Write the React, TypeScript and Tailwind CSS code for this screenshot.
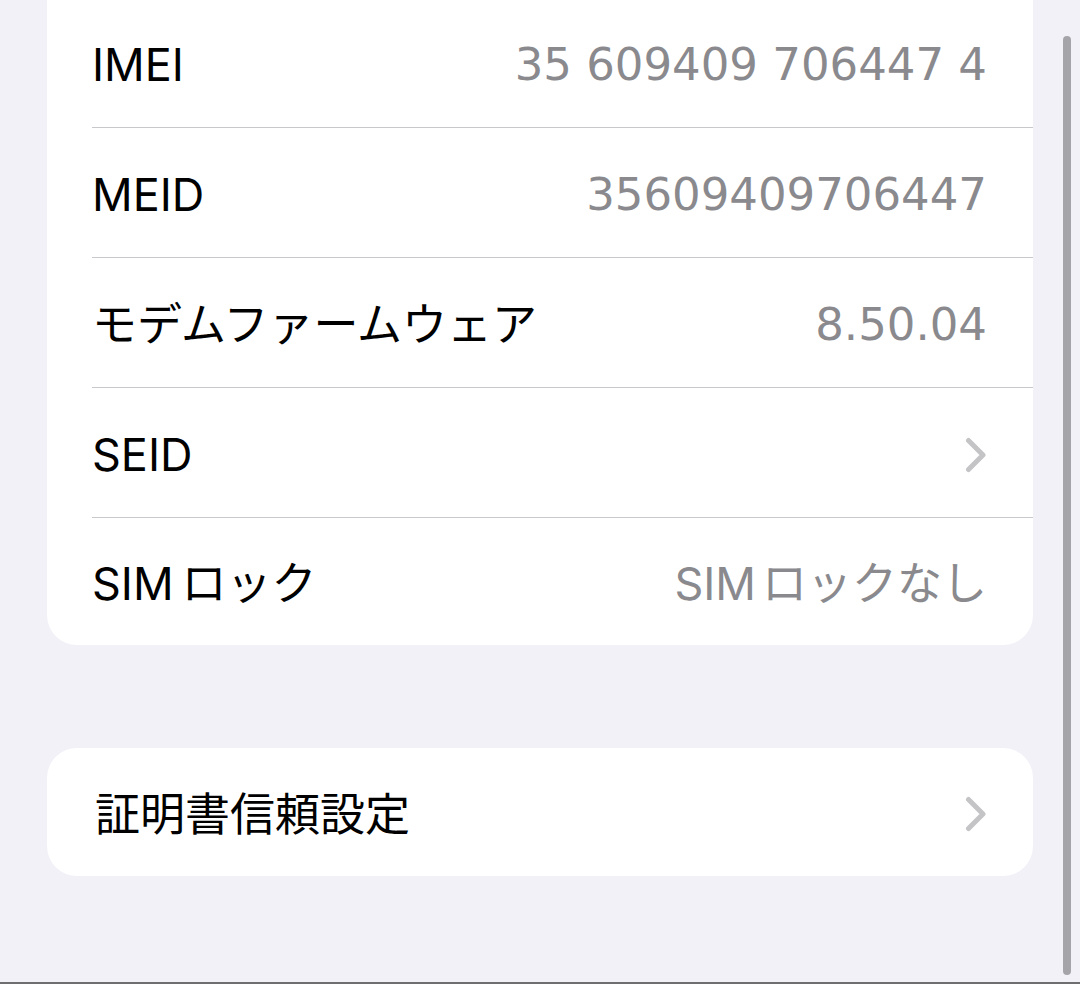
import React from 'react';

type Row = {
  label: React.ReactNode;
  key: string;
  value?: React.ReactNode;
  numeric?: boolean;
  chevron?: boolean;
};

const rows: Row[] = [
  { key: 'imei', label: 'IMEI', value: '35 609409 706447 4', numeric: true },
  { key: 'meid', label: 'MEID', value: '35609409706447', numeric: true },
  { key: 'modem', label: 'モデムファームウェア', value: '8.50.04', numeric: true },
  { key: 'seid', label: 'SEID', chevron: true },
  {
    key: 'sim',
    label: (
      <>
        SIM<span className="ml-[8px]">ロック</span>
      </>
    ),
    value: (
      <>
        SIM<span className="ml-[6px]">ロックなし</span>
      </>
    ),
  },
];

const Chevron = () => (
  <svg width="22" height="36" viewBox="0 0 22 36" fill="none" className="shrink-0">
    <path d="M3.5 3.5 L18 18 L3.5 32.5" stroke="#c4c4c7" strokeWidth="5" strokeLinecap="round" strokeLinejoin="round" />
  </svg>
);

const SettingsRow: React.FC<{ row: Row; last?: boolean }> = ({ row, last }) => (
  <div className="pl-[45px]">
    <div
      className={
        'flex items-center justify-between pr-[46px] pt-[4px] ' +
        (last ? 'h-[127px]' : 'h-[130px] border-b border-[#c8c8cc]')
      }
    >
      <span className="text-[45px] leading-none text-black whitespace-nowrap">{row.label}</span>
      {row.value && (
        <span
          className={
            'leading-none text-[#8a8a8e] whitespace-nowrap ' +
            (row.numeric ? "font-['DejaVu_Sans','Noto_Sans_CJK_JP',sans-serif] text-[45px]" : 'text-[45px]')
          }
        >
          {row.value}
        </span>
      )}
      {row.chevron && <Chevron />}
    </div>
  </div>
);

export default function App() {
  return (
    <div className="relative flex h-[984px] w-[1080px] flex-col overflow-hidden bg-[#f2f1f7] font-['Inter','Noto_Sans_CJK_JP',sans-serif]">
      <div className="mx-[47px] -mt-[2px] overflow-hidden rounded-b-[30px] bg-white">
        {rows.map((row, i) => (
          <SettingsRow key={row.key} row={row} last={i === rows.length - 1} />
        ))}
      </div>

      <div className="mx-[47px] mt-[103px] flex h-[128px] items-center justify-between rounded-[30px] bg-white pl-[48px] pr-[46px] pt-[4px]">
        <span className="text-[45px] leading-none text-black">証明書信頼設定</span>
        <Chevron />
      </div>

      <div className="mt-auto h-[2px] w-full bg-[#6e6e70]" />

      {/* scroll indicator */}
      <div className="absolute right-[9px] top-[36px] h-[939px] w-[8px] rounded-full bg-[#a4a4a9]" />
    </div>
  );
}
